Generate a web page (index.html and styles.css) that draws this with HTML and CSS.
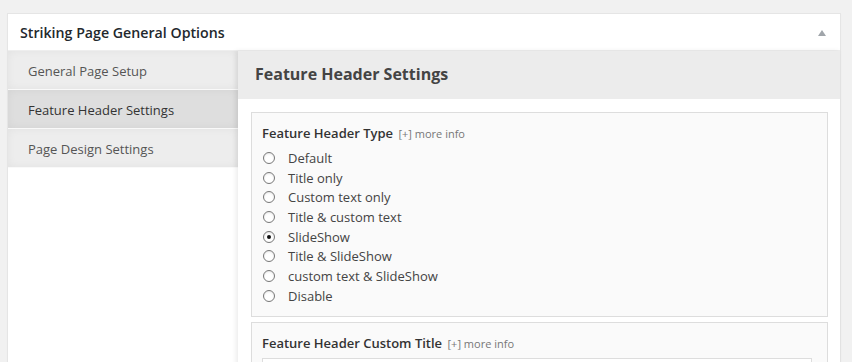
FILE: index.html
```html
<!DOCTYPE html>
<html lang="en">
<head>
    <meta charset="UTF-8">
    <title>Striking Page General Options</title>
    <link rel="stylesheet" href="styles.css">
</head>
<body>

    <div class="postbox">
        <div class="postbox-header">
            <h2>Striking Page General Options</h2>
            <span class="toggle-arrow"></span>
        </div>

        <div class="options-wrap">
            <!-- Tabs -->
            <ul class="tabs">
                <li>General Page Setup</li>
                <li class="current">Feature Header Settings</li>
                <li>Page Design Settings</li>
            </ul>

            <!-- Panel -->
            <div class="panel">
                <h3 class="panel-title">Feature Header Settings</h3>

                <div class="panel-body">
                    <div class="field">
                        <div class="field-label">Feature Header Type <span class="more-info">[+] more info</span></div>
                        <label class="radio"><span class="dot"></span>Default</label>
                        <label class="radio"><span class="dot"></span>Title only</label>
                        <label class="radio"><span class="dot"></span>Custom text only</label>
                        <label class="radio"><span class="dot"></span>Title &amp; custom text</label>
                        <label class="radio"><span class="dot checked"></span>SlideShow</label>
                        <label class="radio"><span class="dot"></span>Title &amp; SlideShow</label>
                        <label class="radio"><span class="dot"></span>custom text &amp; SlideShow</label>
                        <label class="radio"><span class="dot"></span>Disable</label>
                    </div>

                    <div class="field">
                        <div class="field-label">Feature Header Custom Title <span class="more-info">[+] more info</span></div>
                        <div class="text-input"></div>
                    </div>
                </div>
            </div>
        </div>
    </div>

</body>
</html>
```

FILE: styles.css
```css
/* General */
body {
    margin: 0;
    background-color: #f1f1f1;
    font-family: 'Open Sans', sans-serif;
    color: #444;
    font-size: 13px;
    height: 362px;
    overflow: hidden;
}

/* Meta box */
.postbox {
    margin: 13px 11px 0 7px;
    background: #fff;
    border: 1px solid #e5e5e5;
    box-shadow: 0 1px 1px rgba(0, 0, 0, 0.04);
}

.postbox-header {
    display: flex;
    align-items: center;
    justify-content: space-between;
    height: 36px;
    padding: 0 14px 0 12px;
    border-bottom: 1px solid #eee;
}

.postbox-header h2 {
    margin: 0;
    font-size: 14.2px;
    font-weight: 600;
    color: #23282d;
}

.toggle-arrow {
    width: 0;
    height: 0;
    border-left: 4px solid transparent;
    border-right: 4px solid transparent;
    border-bottom: 6px solid #a0a5aa;
    margin-top: 1px;
}

/* Tabs + panel */
.options-wrap {
    display: flex;
    align-items: flex-start;
    background: #fff;
}

.tabs {
    list-style: none;
    margin: 0;
    padding: 0;
    width: 230px;
    flex-shrink: 0;
}

.tabs li {
    height: 38px;
    line-height: 40px;
    padding-left: 20px;
    background: #ededed;
    border-bottom: 1px solid #f9f9f9;
    box-shadow: inset 0 0 8px rgba(0, 0, 0, 0.05);
    color: #555;
    font-size: 13px;
    overflow: hidden;
}

.tabs li.current {
    background: #dedede;
    color: #333;
}

.panel {
    flex-grow: 1;
    background: #fff;
    box-shadow: -2px 0 5px rgba(0, 0, 0, 0.08);
    min-height: 320px;
}

.panel-title {
    margin: 0;
    height: 48px;
    line-height: 46px;
    padding-left: 17px;
    background: #ececec;
    font-size: 16px;
    font-weight: 700;
    color: #444;
}

.panel-body {
    padding: 13px 12px 0 13px;
}

/* Fields */
.field {
    background: #fafafa;
    border: 1px solid #ddd;
    padding: 11px 10px 10px 10px;
    margin-bottom: 5px;
}

.field-label {
    font-size: 13px;
    font-weight: 600;
    color: #333;
    margin-bottom: 6px;
}

.more-info {
    font-size: 11px;
    font-weight: 400;
    color: #777;
    margin-left: 2px;
}

.radio {
    display: flex;
    align-items: center;
    height: 19.7px;
    color: #444;
}

.dot {
    width: 10px;
    height: 10px;
    border: 1px solid #777;
    border-radius: 50%;
    background: #fff;
    margin: 0 13px 0 1px;
    position: relative;
    box-shadow: inset 0 1px 2px rgba(0, 0, 0, 0.1);
}

.dot.checked::after {
    content: "";
    position: absolute;
    left: 3px;
    top: 3px;
    width: 4px;
    height: 4px;
    border-radius: 50%;
    background: #111;
}

.text-input {
    height: 30px;
    background: #fff;
    border: 1px solid #ddd;
    margin-top: 3px;
    margin-right: 5px;
}
```
